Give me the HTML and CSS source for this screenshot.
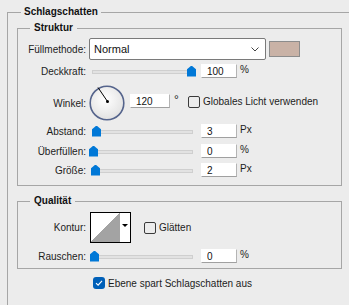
FILE: index.html
```html
<!DOCTYPE html>
<html lang="de">
    <head>
        <meta charset="UTF-8" />
        <meta name="viewport" content="width=device-width, initial-scale=1.0" />
        <title>Schlagschatten</title>
        <link rel="stylesheet" href="styles.css">
    </head>
    <body>
        <fieldset class="group outer">
            <legend>Schlagschatten</legend>

            <fieldset class="group inner struktur">
                <legend>Struktur</legend>

                <div class="row row-blend">
                    <label class="lbl">Füllmethode:</label>
                    <div class="select">
                        <span>Normal</span>
                        <svg class="chevron" width="8" height="5" viewBox="0 0 8 5"><polyline points="0.5,0.5 4,4 7.5,0.5" fill="none" stroke="#444" stroke-width="1" /></svg>
                    </div>
                    <div class="swatch"></div>
                </div>

                <div class="row row-opacity">
                    <label class="lbl">Deckkraft:</label>
                    <div class="slider"><div class="track"></div><span class="thumb" style="left: 98px"></span></div>
                    <input class="num" value="100" readonly />
                    <span class="unit">%</span>
                </div>

                <div class="row row-angle">
                    <label class="lbl">Winkel:</label>
                    <svg class="dial" width="36" height="36" viewBox="0 0 36 36">
                        <defs>
                            <radialGradient id="dialfill" cx="45%" cy="40%" r="60%">
                                <stop offset="0" stop-color="#ffffff" />
                                <stop offset="1" stop-color="#e2e2e2" />
                            </radialGradient>
                        </defs>
                        <circle cx="18" cy="18" r="16.8" fill="url(#dialfill)" stroke="#55648c" stroke-width="1.6" />
                        <line x1="18.5" y1="16.5" x2="9" y2="2.5" stroke="#000" stroke-width="1" />
                        <circle cx="18.5" cy="16.5" r="1.5" fill="#000" />
                    </svg>
                    <input class="num num-wide" value="120" readonly />
                    <span class="deg">°</span>
                    <span class="check"></span>
                    <span class="check-text">Globales Licht verwenden</span>
                </div>

                <div class="row row-dist">
                    <label class="lbl">Abstand:</label>
                    <div class="slider"><div class="track"></div><span class="thumb" style="left: 3px"></span></div>
                    <input class="num" value="3" readonly />
                    <span class="unit">Px</span>
                </div>

                <div class="row row-spread">
                    <label class="lbl">Überfüllen:</label>
                    <div class="slider"><div class="track"></div><span class="thumb" style="left: 0px"></span></div>
                    <input class="num" value="0" readonly />
                    <span class="unit">%</span>
                </div>

                <div class="row row-size">
                    <label class="lbl">Größe:</label>
                    <div class="slider"><div class="track"></div><span class="thumb" style="left: 2px"></span></div>
                    <input class="num" value="2" readonly />
                    <span class="unit">Px</span>
                </div>
            </fieldset>

            <fieldset class="group inner qualitaet">
                <legend>Qualität</legend>

                <div class="row row-contour">
                    <label class="lbl">Kontur:</label>
                    <div class="contour">
                        <div class="curve"></div>
                        <div class="contour-drop"><span class="tri"></span></div>
                    </div>
                    <span class="check check-smooth"></span>
                    <span class="check-text">Glätten</span>
                </div>

                <div class="row row-noise">
                    <label class="lbl">Rauschen:</label>
                    <div class="slider"><div class="track"></div><span class="thumb" style="left: 1px"></span></div>
                    <input class="num" value="0" readonly />
                    <span class="unit">%</span>
                </div>
            </fieldset>

            <div class="row row-knockout">
                <span class="check checked">
                    <svg width="12" height="12" viewBox="0 0 12 12"><polyline points="3,6.2 5.1,8.2 9,3.8" fill="none" stroke="#fff" stroke-width="1.1" /></svg>
                </span>
                <span class="check-text">Ebene spart Schlagschatten aus</span>
            </div>
        </fieldset>
    </body>
</html>
```

FILE: styles.css
```css
body {
    margin: 0;
    width: 349px;
    height: 305px;
    overflow: hidden;
    background: #ececec;
    font-family: "Liberation Sans", Arial, sans-serif;
    font-size: 10px;
    color: #1c1c1c;
}

.group {
    border: 1px solid #a6a6a6;
    margin: 0;
    padding: 0;
    min-width: 0;
}
.group > legend {
    font-weight: bold;
    line-height: 12px;
    color: #111;
}

.outer {
    margin: 6px 0 0 7px;
    padding: 0 0 0 9px;
    border-right: none;
    border-bottom: none;
    box-sizing: border-box;
    height: calc(100vh - 6px);
}
.outer > legend {
    margin-left: 4px;
    padding: 0 3px;
}

.inner {
    margin: 4px 7px 0 0;
}
.inner > legend {
    margin-left: 12px;
    padding: 0 4px;
}
.struktur {
    padding-bottom: 8px;
}
.qualitaet {
    margin-top: 9px;
    padding-bottom: 5px;
}

.row {
    display: flex;
    align-items: center;
}
.lbl {
    width: 68px;
    flex: none;
    margin-right: 3px;
    text-align: right;
}

/* blend mode */
.row-blend {
    margin-top: 4px;
    height: 22px;
}
.select {
    width: 177px;
    height: 22px;
    box-sizing: border-box;
    border: 1px solid #7a7a7a;
    border-radius: 2px;
    background: #fff;
    display: flex;
    align-items: center;
    justify-content: space-between;
    padding: 0 6px 0 4px;
    font-size: 11px;
    color: #111;
}
.swatch {
    width: 31px;
    height: 16px;
    margin-left: 3px;
    box-sizing: border-box;
    border: 1px solid #8c8c8c;
    background: #c9b2a6;
}

/* sliders */
.slider {
    position: relative;
    width: 104px;
    height: 11px;
    flex: none;
}
.track {
    margin: 4px 0 0 3px;
    width: 101px;
    height: 4px;
    box-sizing: border-box;
    border: 1px solid #cfcfcf;
    background: #e2e2e2;
}
.thumb {
    position: absolute;
    top: 0;
    width: 9px;
    height: 11px;
    background: #0078d7;
    clip-path: polygon(50% 0, 100% 35%, 100% 100%, 0 100%, 0 35%);
}

.num {
    width: 36px;
    height: 14px;
    box-sizing: border-box;
    margin: 0 0 0 8px;
    padding: 0 0 0 5px;
    border: 1px solid #fff;
    border-right-color: #b4b4b4;
    border-bottom-color: #a0a0a0;
    background: #fff;
    font-family: inherit;
    font-size: 10px;
    color: #111;
    outline: none;
}
.unit {
    margin-left: 3px;
    align-self: flex-start;
    line-height: 11px;
}

.row-opacity {
    margin-top: 4px;
    height: 14px;
}

/* angle */
.row-angle {
    margin-top: 7px;
    height: 36px;
}
.dial {
    flex: none;
}
.num-wide {
    width: 40px;
    margin: 0 0 4px 5px;
}
.deg {
    margin: 0 0 7px 4px;
    width: 5px;
    font-size: 12px;
}
.check {
    width: 12px;
    height: 12px;
    box-sizing: border-box;
    border: 1px solid #3a3a3a;
    border-radius: 2px;
    flex: none;
}
.row-angle .check {
    margin: 0 0 3px 9px;
}
.check-text {
    margin-left: 3px;
}
.row-angle .check-text {
    margin-bottom: 3px;
}

.row-dist {
    margin-top: 3px;
    height: 14px;
}
.row-spread {
    margin-top: 6px;
    height: 14px;
}
.row-size {
    margin-top: 5px;
    height: 14px;
}

/* quality */
.row-contour {
    margin-top: 5px;
    height: 31px;
}
.contour {
    display: flex;
    width: 41px;
    height: 31px;
    box-sizing: border-box;
    border: 1px solid #000;
    background: #fff;
    margin-left: 1px;
}
.curve {
    width: 29px;
    height: 29px;
    background: linear-gradient(to bottom right, #fff 50%, #a3a3a3 50%);
}
.contour-drop {
    flex: 1;
    display: flex;
    justify-content: center;
    padding-top: 11px;
}
.tri {
    width: 0;
    height: 0;
    border-left: 3px solid transparent;
    border-right: 3px solid transparent;
    border-top: 3px solid #000;
}
.check-smooth {
    margin-left: 13px;
}

.row-noise {
    margin-top: 6px;
    height: 14px;
}

/* knockout */
.row-knockout {
    margin: 8px 0 0 76px;
    height: 12px;
}
.check.checked {
    border: none;
    border-radius: 3px;
    background: #0060b8;
}
.check.checked svg {
    display: block;
}
```
